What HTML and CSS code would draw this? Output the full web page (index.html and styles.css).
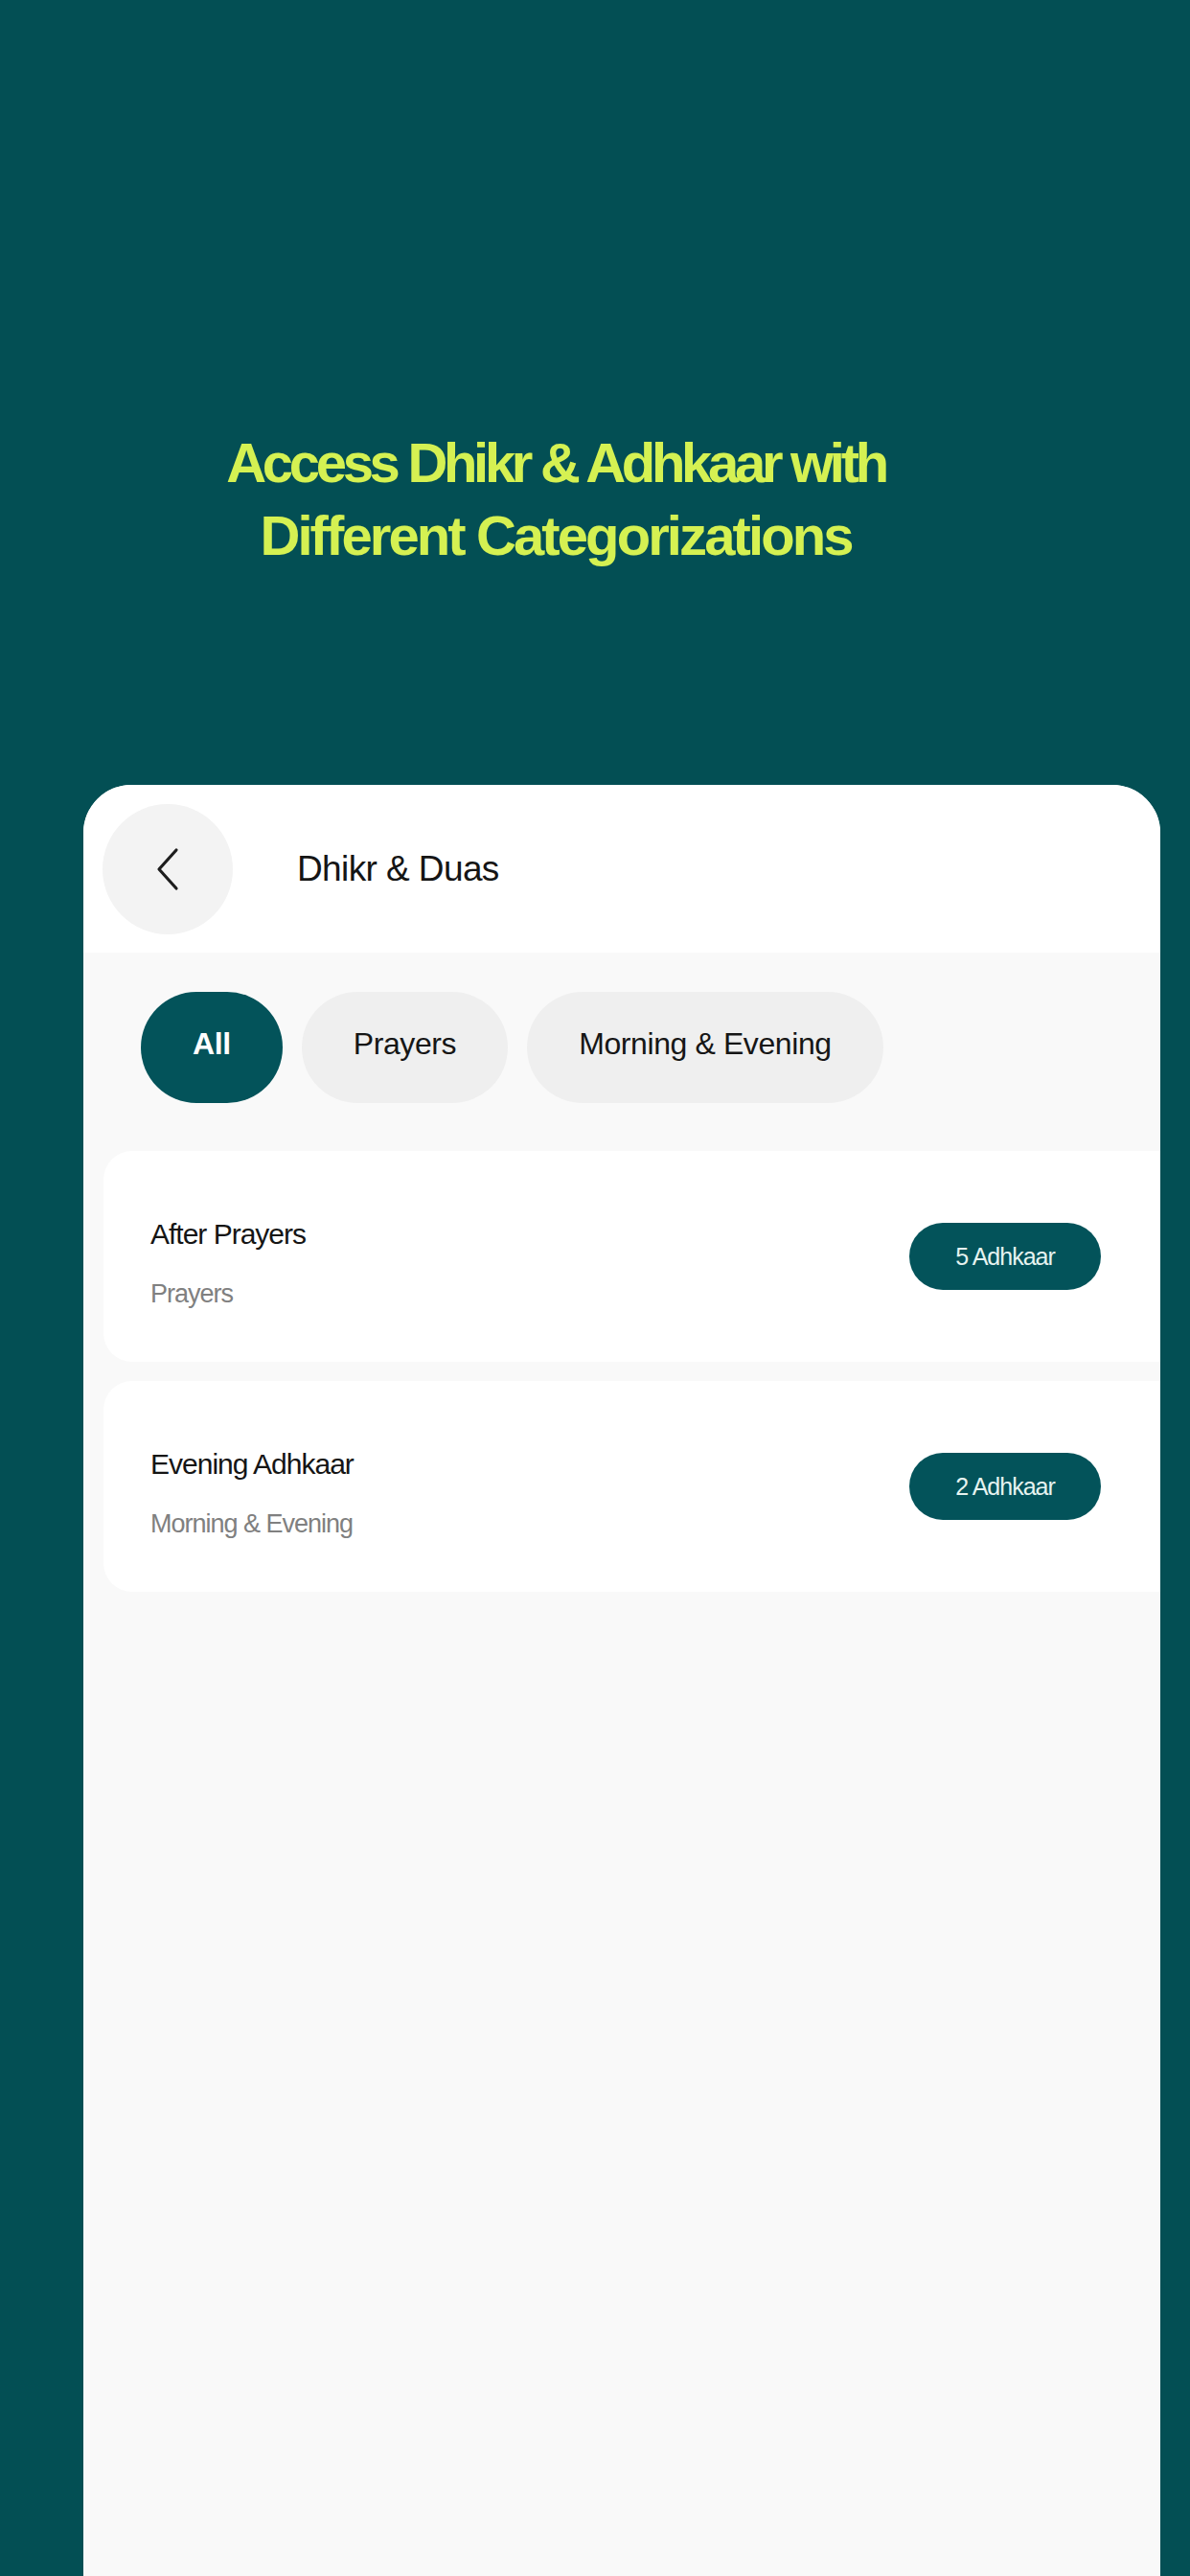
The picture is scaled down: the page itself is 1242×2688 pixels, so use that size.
FILE: index.html
```html
<!DOCTYPE html>
<html lang="en">
<head>
    <meta charset="UTF-8">
    <meta name="viewport" content="width=device-width, initial-scale=1.0">
    <title>Dhikr &amp; Duas</title>
    <link rel="stylesheet" href="styles.css">
</head>
<body>
    <h1 class="headline">Access Dhikr &amp; Adhkaar with<br><span class="headlineLast">Different Categorizations</span></h1>

    <div class="phone">
        <div class="topBar">
            <div class="backButton">
                <svg width="26" height="46" viewBox="0 0 26 46">
                    <path d="M22 3 L4 23 L22 43" fill="none" stroke="#1e1e1e" stroke-width="3.2" stroke-linecap="round" stroke-linejoin="round"/>
                </svg>
            </div>
            <div class="pageTitle">Dhikr &amp; Duas</div>
        </div>

        <div class="content">
            <div class="chips">
                <div class="chip active">All</div>
                <div class="chip">Prayers</div>
                <div class="chip">Morning &amp; Evening</div>
            </div>

            <div class="list">
                <div class="listItem">
                    <div class="itemText">
                        <div class="itemTitle">After Prayers</div>
                        <div class="itemSub">Prayers</div>
                    </div>
                    <div class="badge">5 Adhkaar</div>
                </div>
                <div class="listItem">
                    <div class="itemText">
                        <div class="itemTitle">Evening Adhkaar</div>
                        <div class="itemSub">Morning &amp; Evening</div>
                    </div>
                    <div class="badge">2 Adhkaar</div>
                </div>
            </div>
        </div>
    </div>
</body>
</html>
```

FILE: styles.css
```css
body {
    font-family: 'Liberation Sans', Arial, sans-serif;
    background-color: #034f54;
    margin: 0;
    padding: 0;
    overflow: hidden;
}
.headline {
    margin: 0;
    padding: 445px 82px 0 0;
    text-align: center;
    font-size: 58px;
    line-height: 76px;
    font-weight: bold;
    letter-spacing: -4.3px;
    color: #d5f152;
}
.headlineLast {
    letter-spacing: -2.9px;
}
.phone {
    margin: 222px 31px 0 87px;
    height: 1869px;
    background-color: #f9f9f9;
    border-radius: 50px 50px 0 0;
    overflow: hidden;
}
.topBar {
    height: 175px;
    background-color: #ffffff;
    display: flex;
    align-items: center;
    padding-left: 20px;
}
.backButton {
    width: 136px;
    height: 136px;
    border-radius: 50%;
    background-color: #f3f3f3;
    display: flex;
    align-items: center;
    justify-content: center;
}
.pageTitle {
    margin-left: 67px;
    font-size: 37px;
    letter-spacing: -0.6px;
    color: #151515;
}
.chips {
    display: flex;
    gap: 20px;
    padding: 41px 0 0 60px;
}
.chip {
    height: 116px;
    box-sizing: border-box;
    padding: 0 54px 8px;
    border-radius: 58px;
    background-color: #efefef;
    color: #161616;
    font-size: 32px;
    letter-spacing: -0.4px;
    display: flex;
    align-items: center;
}
.chip.active {
    background-color: #03535a;
    color: #ffffff;
    font-weight: bold;
    padding: 0 54px 8px;
}
.list {
    display: flex;
    flex-direction: column;
    gap: 20px;
    padding: 50px 0 0 21px;
}
.listItem {
    height: 220px;
    margin-right: -30px;
    background-color: #ffffff;
    border-radius: 30px;
    display: flex;
    align-items: center;
    justify-content: space-between;
    padding: 0 92px 0 49px;
}
.itemText {
    margin-top: 14px;
}
.itemTitle {
    font-size: 30px;
    line-height: 36px;
    letter-spacing: -1px;
    color: #151515;
}
.itemSub {
    margin-top: 28px;
    font-size: 27px;
    line-height: 32px;
    letter-spacing: -1px;
    color: #808080;
}
.badge {
    width: 200px;
    height: 70px;
    border-radius: 35px;
    background-color: #03535a;
    color: #e6f3f0;
    font-size: 25px;
    letter-spacing: -1px;
    display: flex;
    align-items: center;
    justify-content: center;
}
```
